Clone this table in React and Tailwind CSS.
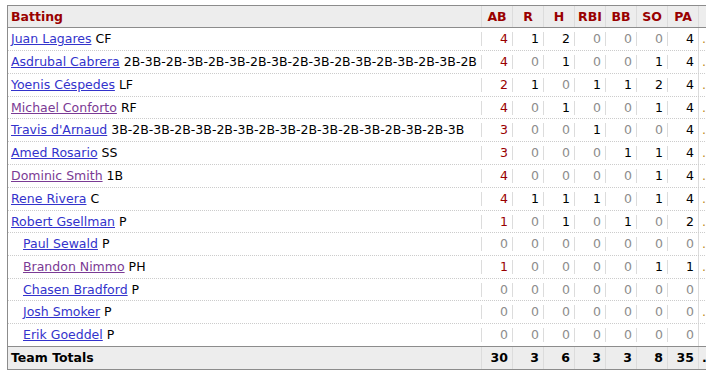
import React from "react";

const rows = [
  { name: "Juan Lagares", pos: "CF", v: false, ind: false, h: "h-[23px]", s: [4, 1, 2, 0, 0, 0, 4], dot: true },
  { name: "Asdrubal Cabrera", pos: "2B-3B-2B-3B-2B-3B-2B-3B-2B-3B-2B-3B-2B-3B-2B-3B-2B", v: false, ind: false, h: "h-[23px]", s: [4, 0, 1, 0, 0, 1, 4], dot: true },
  { name: "Yoenis Céspedes", pos: "LF", v: false, ind: false, h: "h-[23px]", s: [2, 1, 0, 1, 1, 2, 4], dot: true },
  { name: "Michael Conforto", pos: "RF", v: true, ind: false, h: "h-[22px]", s: [4, 0, 1, 0, 0, 1, 4], dot: true },
  { name: "Travis d'Arnaud", pos: "3B-2B-3B-2B-3B-2B-3B-2B-3B-2B-3B-2B-3B-2B-3B-2B-3B", v: false, ind: false, h: "h-[23px]", s: [3, 0, 0, 1, 0, 0, 4], dot: true },
  { name: "Amed Rosario", pos: "SS", v: false, ind: false, h: "h-[23px]", s: [3, 0, 0, 0, 1, 1, 4], dot: true },
  { name: "Dominic Smith", pos: "1B", v: true, ind: false, h: "h-[23px]", s: [4, 0, 0, 0, 0, 1, 4], dot: true },
  { name: "Rene Rivera", pos: "C", v: false, ind: false, h: "h-[23px]", s: [4, 1, 1, 1, 0, 1, 4], dot: true },
  { name: "Robert Gsellman", pos: "P", v: false, ind: false, h: "h-[22px]", s: [1, 0, 1, 0, 1, 0, 2], dot: true },
  { name: "Paul Sewald", pos: "P", v: false, ind: true, h: "h-[23px]", s: [0, 0, 0, 0, 0, 0, 0], dot: true },
  { name: "Brandon Nimmo", pos: "PH", v: true, ind: true, h: "h-[23px]", s: [1, 0, 0, 0, 0, 1, 1], dot: true },
  { name: "Chasen Bradford", pos: "P", v: false, ind: true, h: "h-[22px]", s: [0, 0, 0, 0, 0, 0, 0], dot: false },
  { name: "Josh Smoker", pos: "P", v: false, ind: true, h: "h-[23px]", s: [0, 0, 0, 0, 0, 0, 0], dot: true },
  { name: "Erik Goeddel", pos: "P", v: false, ind: true, h: "h-[22px]", s: [0, 0, 0, 0, 0, 0, 0], dot: false, last: true },
];

const heads = ["AB", "R", "H", "RBI", "BB", "SO", "PA"];
const totals = [30, 3, 6, 3, 3, 8, 35];

function Num({ n, i }) {
  let color = "text-[#000]";
  if (n === 0) color = "text-[#8c8c8c]";
  else if (i === 0) color = "text-[#990000]";
  return (
    <div className={`w-[31px] shrink-0 border-l border-[#dcdcdc] text-right pr-[4px] ${color}`}>
      {n}
    </div>
  );
}

export default function App() {
  return (
    <div
      className="w-[706px] h-[381px] overflow-hidden bg-white text-[12.5px] leading-[14px]"
      style={{ fontFamily: '"DejaVu Sans", Verdana, sans-serif' }}
    >
      <div className="ml-[7px] mt-[5px] w-[760px] border-l border-t border-[#8c8c8c]">
        {/* header */}
        <div className="flex items-center h-[22px] bg-[#ededed] border-b border-[#8c8c8c] font-bold text-[#990000]">
          <div className="w-[473px] shrink-0 pl-[3px]">Batting</div>
          {heads.map((h) => (
            <div key={h} className="w-[31px] shrink-0 self-stretch flex items-center justify-center border-l border-[#dcdcdc]">
              {h}
            </div>
          ))}
          <div className="w-[40px] shrink-0 self-stretch border-l border-[#dcdcdc]"></div>
        </div>
        {rows.map((r) => (
          <div
            key={r.name}
            className={`flex items-stretch ${r.h} ${r.last ? "" : "border-b border-dotted border-[#cccccc]"}`}
          >
            <div className={`w-[473px] shrink-0 flex items-center whitespace-nowrap ${r.ind ? "pl-[15px]" : "pl-[3px]"}`}>
              <a
                href="#"
                className={`underline ${r.v ? "text-[#7a3a94]" : "text-[#3333cc]"}`}
              >
                {r.name}
              </a>
              <span className="text-black">&nbsp;{r.pos}</span>
            </div>
            {r.s.map((n, i) => (
              <div key={i} className="flex items-center">
                <Num n={n} i={i} />
              </div>
            ))}
            <div className="w-[40px] shrink-0 flex items-center border-l border-[#dcdcdc] pl-[3px] text-[#c08a20]">
              {r.dot ? "." : ""}
            </div>
          </div>
        ))}
        {/* totals */}
        <div className="flex items-stretch h-[24px] bg-[#ededed] border-t border-b border-[#8c8c8c] font-bold text-black">
          <div className="w-[473px] shrink-0 flex items-center pl-[3px]">Team Totals</div>
          {totals.map((n, i) => (
            <div key={i} className="w-[31px] shrink-0 flex items-center justify-end pr-[4px] border-l border-[#dcdcdc]">
              {n}
            </div>
          ))}
          <div className="w-[40px] shrink-0 flex items-center border-l border-[#dcdcdc] pl-[3px]">.</div>
        </div>
      </div>
    </div>
  );
}
